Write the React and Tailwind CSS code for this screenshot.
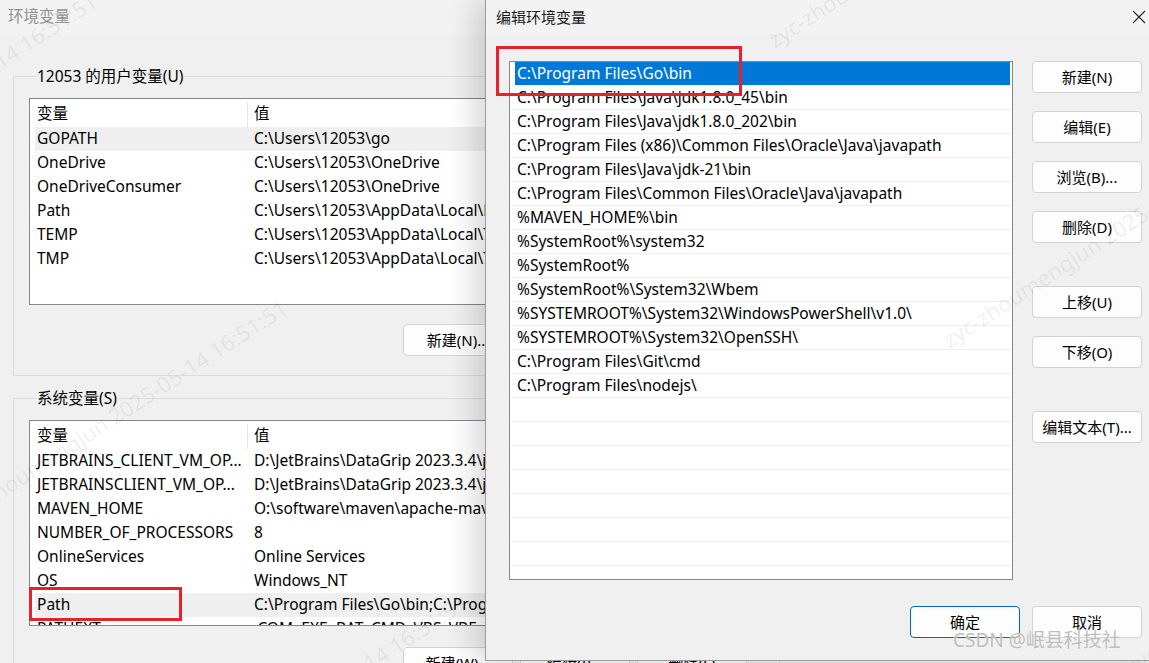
import React from "react";

const FONT = "font-['Noto_Sans','Noto_Sans_CJK_SC',sans-serif]";

function Btn({ children, primary = false }) {
  return (
    <div
      className={
        "h-[32px] w-[110px] shrink-0 rounded-[4px] flex items-center justify-center text-[15px] text-black " +
        (primary
          ? "border-[1.5px] border-[#0067c0] bg-[#fdfdfd]"
          : "border border-[#d3d3d3] bg-[#fdfdfd]")
      }
    >
      {children}
    </div>
  );
}

function VarList({ height, rows, highlight }) {
  return (
    <div
      className="mt-[12px] border border-[#828790] bg-white overflow-hidden"
      style={{ height }}
    >
      <div className="h-[28px] pt-[2px] ml-[5px] flex items-center">
        <div className="w-[212px] pl-[2px]">变量</div>
        <div className="w-px h-[25px] bg-[#e5e5e5]" />
        <div className="pl-[6px]">值</div>
      </div>
      {rows.map(([k, v], i) => (
        <div
          key={i}
          className={
            "h-[24px] ml-[5px] flex items-center whitespace-nowrap " +
            (i === highlight ? "bg-[#efefef]" : "")
          }
        >
          <div className="w-[217px] pl-[2px] overflow-hidden">{k}</div>
          <div className="pl-[2px]">{v}</div>
        </div>
      ))}
    </div>
  );
}

function LeftWindow() {
  const userRows = [
    ["GOPATH", "C:\\Users\\12053\\go"],
    ["OneDrive", "C:\\Users\\12053\\OneDrive"],
    ["OneDriveConsumer", "C:\\Users\\12053\\OneDrive"],
    ["Path", "C:\\Users\\12053\\AppData\\Local\\Microsoft\\WindowsApps"],
    ["TEMP", "C:\\Users\\12053\\AppData\\Local\\Temp"],
    ["TMP", "C:\\Users\\12053\\AppData\\Local\\Temp"],
  ];
  const sysRows = [
    ["JETBRAINS_CLIENT_VM_OP...", "D:\\JetBrains\\DataGrip 2023.3.4\\jetbra\\vmoptions"],
    ["JETBRAINSCLIENT_VM_OP...", "D:\\JetBrains\\DataGrip 2023.3.4\\jetbra\\vmoptions"],
    ["MAVEN_HOME", "O:\\software\\maven\\apache-maven-3.9.6"],
    ["NUMBER_OF_PROCESSORS", "8"],
    ["OnlineServices", "Online Services"],
    ["OS", "Windows_NT"],
    ["Path", "C:\\Program Files\\Go\\bin;C:\\Program Files\\Java"],
    ["PATHEXT", ".COM;.EXE;.BAT;.CMD;.VBS;.VBE;.JS;.JSE"],
  ];
  return (
    <div className="w-[780px] h-[663px] flex flex-col text-[15.5px] text-black">
      <div className="h-[34px] shrink-0 bg-[#f3f3f3] pl-[8px] flex items-center text-[#929292]">
        环境变量
      </div>
      <div className="pl-[13px] pt-[32px]">
        <fieldset className="border border-[#dcdcdc] pl-[15px] pb-[19px]">
          <legend className="ml-[7px] px-[1px] leading-[20px]">12053 的用户变量(U)</legend>
          <VarList height={207} rows={userRows} highlight={0} />
          <div className="mt-[19px] pl-[374px] flex">
            <Btn>新建(N)...</Btn>
          </div>
        </fieldset>
        <fieldset className="mt-[12px] border border-[#dcdcdc] pl-[15px] pb-[19px]">
          <legend className="ml-[7px] px-[1px] leading-[20px]">系统变量(S)</legend>
          <VarList height={206} rows={sysRows} highlight={6} />
          <div className="mt-[21px] pl-[374px] flex gap-[7px]">
            <Btn>新建(W)...</Btn>
            <Btn>编辑(I)...</Btn>
            <Btn>删除(L)</Btn>
          </div>
        </fieldset>
      </div>
    </div>
  );
}

function Dialog() {
  const paths = [
    "C:\\Program Files\\Go\\bin",
    "C:\\Program Files\\Java\\jdk1.8.0_45\\bin",
    "C:\\Program Files\\Java\\jdk1.8.0_202\\bin",
    "C:\\Program Files (x86)\\Common Files\\Oracle\\Java\\javapath",
    "C:\\Program Files\\Java\\jdk-21\\bin",
    "C:\\Program Files\\Common Files\\Oracle\\Java\\javapath",
    "%MAVEN_HOME%\\bin",
    "%SystemRoot%\\system32",
    "%SystemRoot%",
    "%SystemRoot%\\System32\\Wbem",
    "%SYSTEMROOT%\\System32\\WindowsPowerShell\\v1.0\\",
    "%SYSTEMROOT%\\System32\\OpenSSH\\",
    "C:\\Program Files\\Git\\cmd",
    "C:\\Program Files\\nodejs\\",
    "", "", "", "", "", "", "", "",
  ];
  return (
    <div className="absolute left-[485px] top-0 w-[680px] h-[661px] bg-[#f0f0f0] border-l border-b border-[#9c9c9c] shadow-[-10px_0_28px_rgba(0,0,0,0.16)] flex flex-col text-[15.5px] text-black">
      <div className="h-[34px] shrink-0 bg-[#f3f3f3] flex items-center pl-[10px]">
        <span className="text-[#1a1a1a] text-[15px]">编辑环境变量</span>
        <svg className="ml-auto mr-[19px]" width="14" height="14" viewBox="0 0 14 14">
          <path d="M1 1 L13 13 M13 1 L1 13" stroke="#222" strokeWidth="1.1" fill="none" />
        </svg>
      </div>
      <div className="flex pl-[23px] pt-[27px]">
        <div className="w-[504px] h-[519px] border border-[#828790] bg-white overflow-hidden">
          {paths.map((p, i) => (
            <div key={i} className="h-[24px] mx-[1px] border-b border-[#f0f0f0] flex items-center whitespace-nowrap">
              {i === 0 ? (
                <div className="h-[23px] w-full ml-[4px] mr-[1px] bg-[#0078d7] text-white flex items-center pl-[2px]">
                  {p}
                </div>
              ) : (
                <div className="pl-[6px]">{p}</div>
              )}
            </div>
          ))}
        </div>
        <div className="ml-[19px] flex flex-col">
          <Btn>新建(N)</Btn>
          <div className="mt-[18px]"><Btn>编辑(E)</Btn></div>
          <div className="mt-[18px]"><Btn>浏览(B)...</Btn></div>
          <div className="mt-[18px]"><Btn>删除(D)</Btn></div>
          <div className="mt-[43px]"><Btn>上移(U)</Btn></div>
          <div className="mt-[18px]"><Btn>下移(O)</Btn></div>
          <div className="mt-[43px]"><Btn>编辑文本(T)...</Btn></div>
        </div>
      </div>
      <div className="mt-[26px] pl-[424px] flex gap-[12px]">
        <Btn primary>确定</Btn>
        <Btn>取消</Btn>
      </div>
    </div>
  );
}

function Watermark({ className, text }) {
  return (
    <div
      className={
        "absolute pointer-events-none whitespace-nowrap text-[22px] text-black/[0.07] -rotate-[33deg] origin-left " +
        className
      }
    >
      {text}
    </div>
  );
}

export default function App() {
  const wm = "zyc-zhoumengjun 2025-05-14 16:51:51";
  return (
    <div className={"relative w-[1149px] h-[663px] overflow-hidden bg-[#f0f0f0] " + FONT}>
      <LeftWindow />
      <Dialog />

      <Watermark className="left-[-238px] top-[198px]" text={wm} />
      <Watermark className="left-[-48px] top-[505px]" text={wm} />
      <Watermark className="left-[132px] top-[800px]" text={wm} />
      <Watermark className="left-[770px] top-[25px]" text={wm} />
      <Watermark className="left-[945px] top-[325px]" text={wm} />
      <Watermark className="left-[1128px] top-[652px]" text={wm} />

      <div className="absolute left-[496px] top-[46px] w-[246px] h-[50px] border-[3px] border-[#e8202a] pointer-events-none" />
      <div className="absolute left-[29px] top-[587px] w-[153px] h-[34px] border-[3px] border-[#e8202a] pointer-events-none" />

      <div className="absolute left-[953px] top-[628px] text-[19px] leading-[24px] text-[#bdbdbd] [text-shadow:0_0_2px_#ffffff] pointer-events-none whitespace-nowrap">
        CSDN @岷县科技社
      </div>
    </div>
  );
}
